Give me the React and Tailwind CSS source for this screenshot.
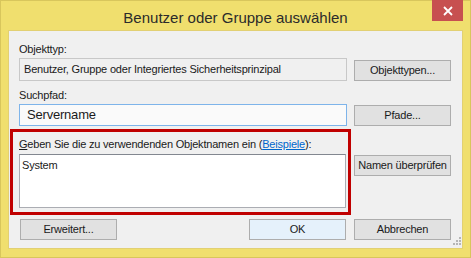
export default function App() {
  const btn = 'w-[97px] h-[21px] flex items-center justify-center border border-[#adadad] bg-[#e1e1e1] text-[#1a1a1a] whitespace-nowrap'
  return (
    <div className="w-[471px] h-[258px] bg-[#f0df6e] border border-[#d8c65c] font-['Liberation_Sans',sans-serif] relative flex flex-col">
      <div className="h-[29px] flex items-start relative">
        <div className="flex-1 text-center text-[15px] text-[#2b2b2b] pt-[6px] whitespace-nowrap">Benutzer oder Gruppe auswählen</div>
        <div className="absolute right-[7px] top-[-1px] w-[31px] h-[21px] bg-[#c75050] flex items-center justify-center">
          <svg width="10" height="10" viewBox="0 0 10 10"><path d="M1 1L9 9M9 1L1 9" stroke="white" strokeWidth="1.8" /></svg>
        </div>
      </div>
      <div className="ml-[7px] w-[455px] h-[219px] bg-[#f0f0f0] border border-[#e2d073] text-[11px] tracking-[-0.2px] text-[#1a1a1a] px-[10px] flex flex-col whitespace-nowrap">
        <div className="pt-[11px] h-[26px] leading-[15px]">Objekttyp:</div>
        <div className="mt-[1px] flex items-end gap-[7px]">
          <div className="w-[328px] h-[23px] border border-[#c8c8c8] bg-[#f0f0f0] flex items-center pl-[4px]">Benutzer, Gruppe oder Integriertes Sicherheitsprinzipal</div>
          <div className={btn}>Objekttypen...</div>
        </div>
        <div className="mt-[7px] h-[15px] leading-[15px]">Suchpfad:</div>
        <div className="mt-[1px] flex items-end gap-[7px]">
          <div className="w-[328px] h-[22px] border border-[#7eb4ea] bg-[#fafafa] flex items-center pl-[7px] text-[13px] tracking-[-0.2px]">Servername</div>
          <div className={btn}>Pfade...</div>
        </div>
        <div className="mt-[3px] -ml-[9px] flex items-start gap-[3px]">
          <div className="w-[341px] border-[3px] border-[#c00000] pl-[6px] pr-[2px] pt-[5px] pb-[4px]">
            <div className="h-[15px] leading-[15px]"><span className="underline">G</span>eben Sie die zu verwendenden Objektnamen ein (<span className="text-[#0066cc] underline">Beispiele</span>):</div>
            <div className="mt-[2px] w-[327px] h-[54px] border border-[#abadb3] border-t-[#828790] bg-white px-[2px] pt-[3px] leading-[15px]">System</div>
          </div>
          <div className={btn + ' mt-[26px]'}>Namen überprüfen</div>
        </div>
        <div className="mt-[4px] flex items-center">
          <div className={btn + ' ml-[1px]'}>Erweitert...</div>
          <div className={btn + ' ml-[132px] border-[#3c8fdc] bg-[#e5f1fb]'}>OK</div>
          <div className={btn + ' ml-[8px]'}>Abbrechen</div>
        </div>
      </div>
      <svg className="absolute left-[452px] top-[236px]" width="9" height="9" viewBox="0 0 9 9" fill="#b5b5b5">
        <rect x="6" y="0" width="2" height="2" />
        <rect x="3" y="3" width="2" height="2" />
        <rect x="6" y="3" width="2" height="2" />
        <rect x="0" y="6" width="2" height="2" />
        <rect x="3" y="6" width="2" height="2" />
        <rect x="6" y="6" width="2" height="2" />
      </svg>
    </div>
  )
}
